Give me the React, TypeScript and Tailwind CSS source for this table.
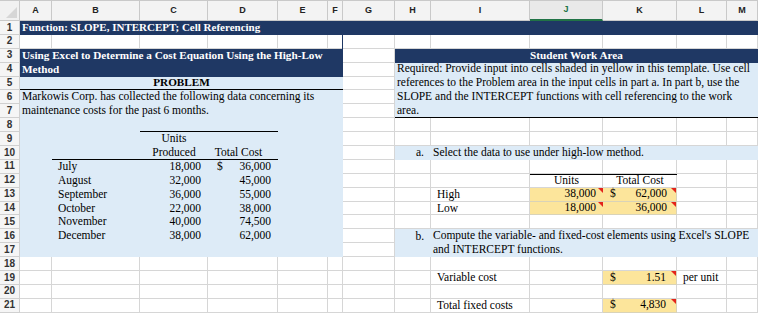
const cols = ['A', 'B', 'C', 'D', 'E', 'F', 'G', 'H', 'I', 'J', 'K', 'L', 'M']
const rows = Array.from({ length: 21 }, (_, i) => i + 1)

// same column/row template for the gridline layer and the content layer
const sheet =
  'col-start-1 row-start-1 grid grid-cols-[20px_32px_88px_68px_70px_50px_15px_52px_36px_99px_73px_74px_50px_31px] grid-rows-[21px_repeat(21,13.9px)]'

const months = [
  { m: 'July', u: '18,000', c: '36,000', d: true },
  { m: 'August', u: '32,000', c: '45,000' },
  { m: 'September', u: '36,000', c: '55,000' },
  { m: 'October', u: '22,000', c: '38,000' },
  { m: 'November', u: '40,000', c: '74,500' },
  { m: 'December', u: '38,000', c: '62,000' },
]

const monthRow = [
  'row-start-12',
  'row-start-13',
  'row-start-14',
  'row-start-15',
  'row-start-16',
  'row-start-17',
]

function Tri() {
  return (
    <svg className="absolute right-0 top-0" width="5" height="5" viewBox="0 0 5 5">
      <path d="M0 0H5V5Z" fill="#e3231b" />
    </svg>
  )
}

function GridLayer() {
  return (
    <div className={sheet}>
      <div className="border-t border-r border-b border-[#c9c9c9] bg-[#f1f1f1] flex items-end justify-end p-[2px]">
        <svg width="11" height="11" viewBox="0 0 11 11">
          <path d="M11 0V11H0Z" fill="#d6d6d6" />
        </svg>
      </div>
      {cols.map(c =>
        c === 'J' ? (
          <div
            key={c}
            className="border-t border-r border-[#c9c9c9] border-b-2 border-b-[#217346] bg-[#e9e9e9] flex items-center justify-center font-['Liberation_Sans',sans-serif] text-[9px] font-bold text-[#217346]"
          >
            {c}
          </div>
        ) : (
          <div
            key={c}
            className="border-t border-r border-b border-[#c9c9c9] bg-[#f3f3f3] flex items-center justify-center font-['Liberation_Sans',sans-serif] text-[9px] font-bold text-[#222]"
          >
            {c}
          </div>
        )
      )}
      {rows.map(r => (
        <div key={r} className="contents">
          <div className="border-r border-b border-[#d0d0d0] bg-[#f5f5f5] flex items-center justify-center font-['Liberation_Sans',sans-serif] text-[10px] font-bold text-[#333]">
            {r}
          </div>
          {cols.map(c => (
            <div key={c} className="border-r border-b border-[#d6d6d6] bg-white" />
          ))}
        </div>
      ))}
    </div>
  )
}

export default function App() {
  return (
    <div className="grid w-[758px] h-[316px] overflow-hidden bg-white font-['Liberation_Serif',serif] text-[11.5px] leading-[13.9px] text-black">
      <GridLayer />

      <div className={sheet}>
        {/* Row 1 title */}
        <div className="col-start-2 col-end-15 row-start-2 bg-[#1f3864] text-white text-[11px] font-bold flex items-center pl-[2px]">
          Function: SLOPE, INTERCEPT; Cell Referencing
        </div>
        <div className="col-start-7 row-start-3 border-r border-r-[#1f3864]" />

        {/* Left block */}
        <div className="col-start-2 col-end-8 row-start-4 row-end-6 bg-[#1f3864] text-white text-[11.2px] font-bold flex flex-col justify-center pl-[2px]">
          <span>Using Excel to Determine a Cost Equation Using the High-Low</span>
          <span>Method</span>
        </div>
        <div className="col-start-2 col-end-8 row-start-6 bg-[#ddebf7] border-b border-black text-[11.2px] font-bold flex items-center justify-center">
          PROBLEM
        </div>
        <div className="col-start-2 col-end-8 row-start-7 row-end-19 bg-[#ddebf7]" />
        <div className="col-start-2 col-end-8 row-start-7 row-end-9 flex flex-col justify-center pl-[2px]">
          <span>Markowis Corp. has collected the following data concerning its</span>
          <span>maintenance costs for the past 6 months.</span>
        </div>
        <div className="col-start-4 col-end-6 row-start-9 border-b border-black" />
        <div className="col-start-4 row-start-10 flex items-center justify-center">Units</div>
        <div className="col-start-3 col-end-6 row-start-11 border-b border-black" />
        <div className="col-start-4 row-start-11 flex items-center justify-center">Produced</div>
        <div className="col-start-5 row-start-11 flex items-center justify-center pr-[9px]">Total Cost</div>
        {months.map((x, i) => (
          <div key={x.m} className="contents">
            <div className={`col-start-3 ${monthRow[i]} flex items-center pl-[6px]`}>{x.m}</div>
            <div className={`col-start-4 ${monthRow[i]} flex items-center justify-end pr-[7px]`}>{x.u}</div>
            <div className={`col-start-5 ${monthRow[i]} flex items-center justify-between pl-[9px] pr-[7px]`}>
              <span>{x.d ? '$' : ''}</span>
              <span>{x.c}</span>
            </div>
          </div>
        ))}

        {/* Right block */}
        <div className="col-start-9 col-end-15 row-start-4 bg-[#1f3864] text-white text-[11.2px] font-bold flex items-center justify-center">
          Student Work Area
        </div>
        <div className="col-start-9 col-end-15 row-start-5 row-end-9 bg-[#ddebf7] border-b border-black flex flex-col justify-center pl-[2px] whitespace-nowrap">
          <span>Required: Provide input into cells shaded in yellow in this template. Use cell</span>
          <span>references to the Problem area in the input cells in part a. In part b, use the</span>
          <span>SLOPE and the INTERCEPT functions with cell referencing to the work</span>
          <span>area.</span>
        </div>

        <div className="col-start-9 col-end-15 row-start-11 bg-[#ddebf7] flex items-center">
          <span className="w-[36px] text-right pr-[7px]">a.</span>
          <span className="pl-[2px]">Select the data to use under high-low method.</span>
        </div>

        <div className="col-start-11 col-end-13 row-start-13 border-t border-black" />
        <div className="col-start-11 row-start-13 flex items-center justify-center">Units</div>
        <div className="col-start-12 row-start-13 flex items-center justify-center">Total Cost</div>

        <div className="col-start-10 row-start-14 flex items-center pl-[6px]">High</div>
        <div className="col-start-11 row-start-14 relative bg-[#fce59b] border-b border-[#d9d3b8] flex items-center justify-end pr-[7px]">
          38,000
          <Tri />
        </div>
        <div className="col-start-12 row-start-14 relative bg-[#fce59b] border-b border-r border-[#d9d3b8] flex items-center justify-between pl-[7px] pr-[9px]">
          <span>$</span>
          <span>62,000</span>
          <Tri />
        </div>
        <div className="col-start-10 row-start-15 flex items-center pl-[6px]">Low</div>
        <div className="col-start-11 row-start-15 relative bg-[#fce59b] border-b border-[#d9d3b8] flex items-center justify-end pr-[7px]">
          18,000
          <Tri />
        </div>
        <div className="col-start-12 row-start-15 relative bg-[#fce59b] border-b border-r border-[#d9d3b8] flex items-center justify-end pl-[7px] pr-[9px]">
          36,000
          <Tri />
        </div>

        <div className="col-start-9 col-end-15 row-start-17 row-end-19 bg-[#ddebf7] flex">
          <span className="w-[36px] text-right pr-[7px] pt-[1px]">b.</span>
          <div className="flex flex-col justify-center pl-[2px] whitespace-nowrap">
            <span>Compute the variable- and fixed-cost elements using Excel's SLOPE</span>
            <span>and INTERCEPT functions.</span>
          </div>
        </div>

        <div className="col-start-10 row-start-20 flex items-center pl-[6px]">Variable cost</div>
        <div className="col-start-12 row-start-20 relative bg-[#fce59b] border-b border-r border-[#d9d3b8] flex items-center justify-between pl-[7px] pr-[10px]">
          <span>$</span>
          <span>1.51</span>
          <Tri />
        </div>
        <div className="col-start-13 row-start-20 flex items-center pl-[6px] whitespace-nowrap">per unit</div>

        <div className="col-start-10 row-start-22 flex items-center pl-[6px] whitespace-nowrap">Total fixed costs</div>
        <div className="col-start-12 row-start-22 relative bg-[#fce59b] border-b border-r border-[#d9d3b8] flex items-center justify-between pl-[7px] pr-[10px]">
          <span>$</span>
          <span>4,830</span>
          <Tri />
        </div>
      </div>
    </div>
  )
}
